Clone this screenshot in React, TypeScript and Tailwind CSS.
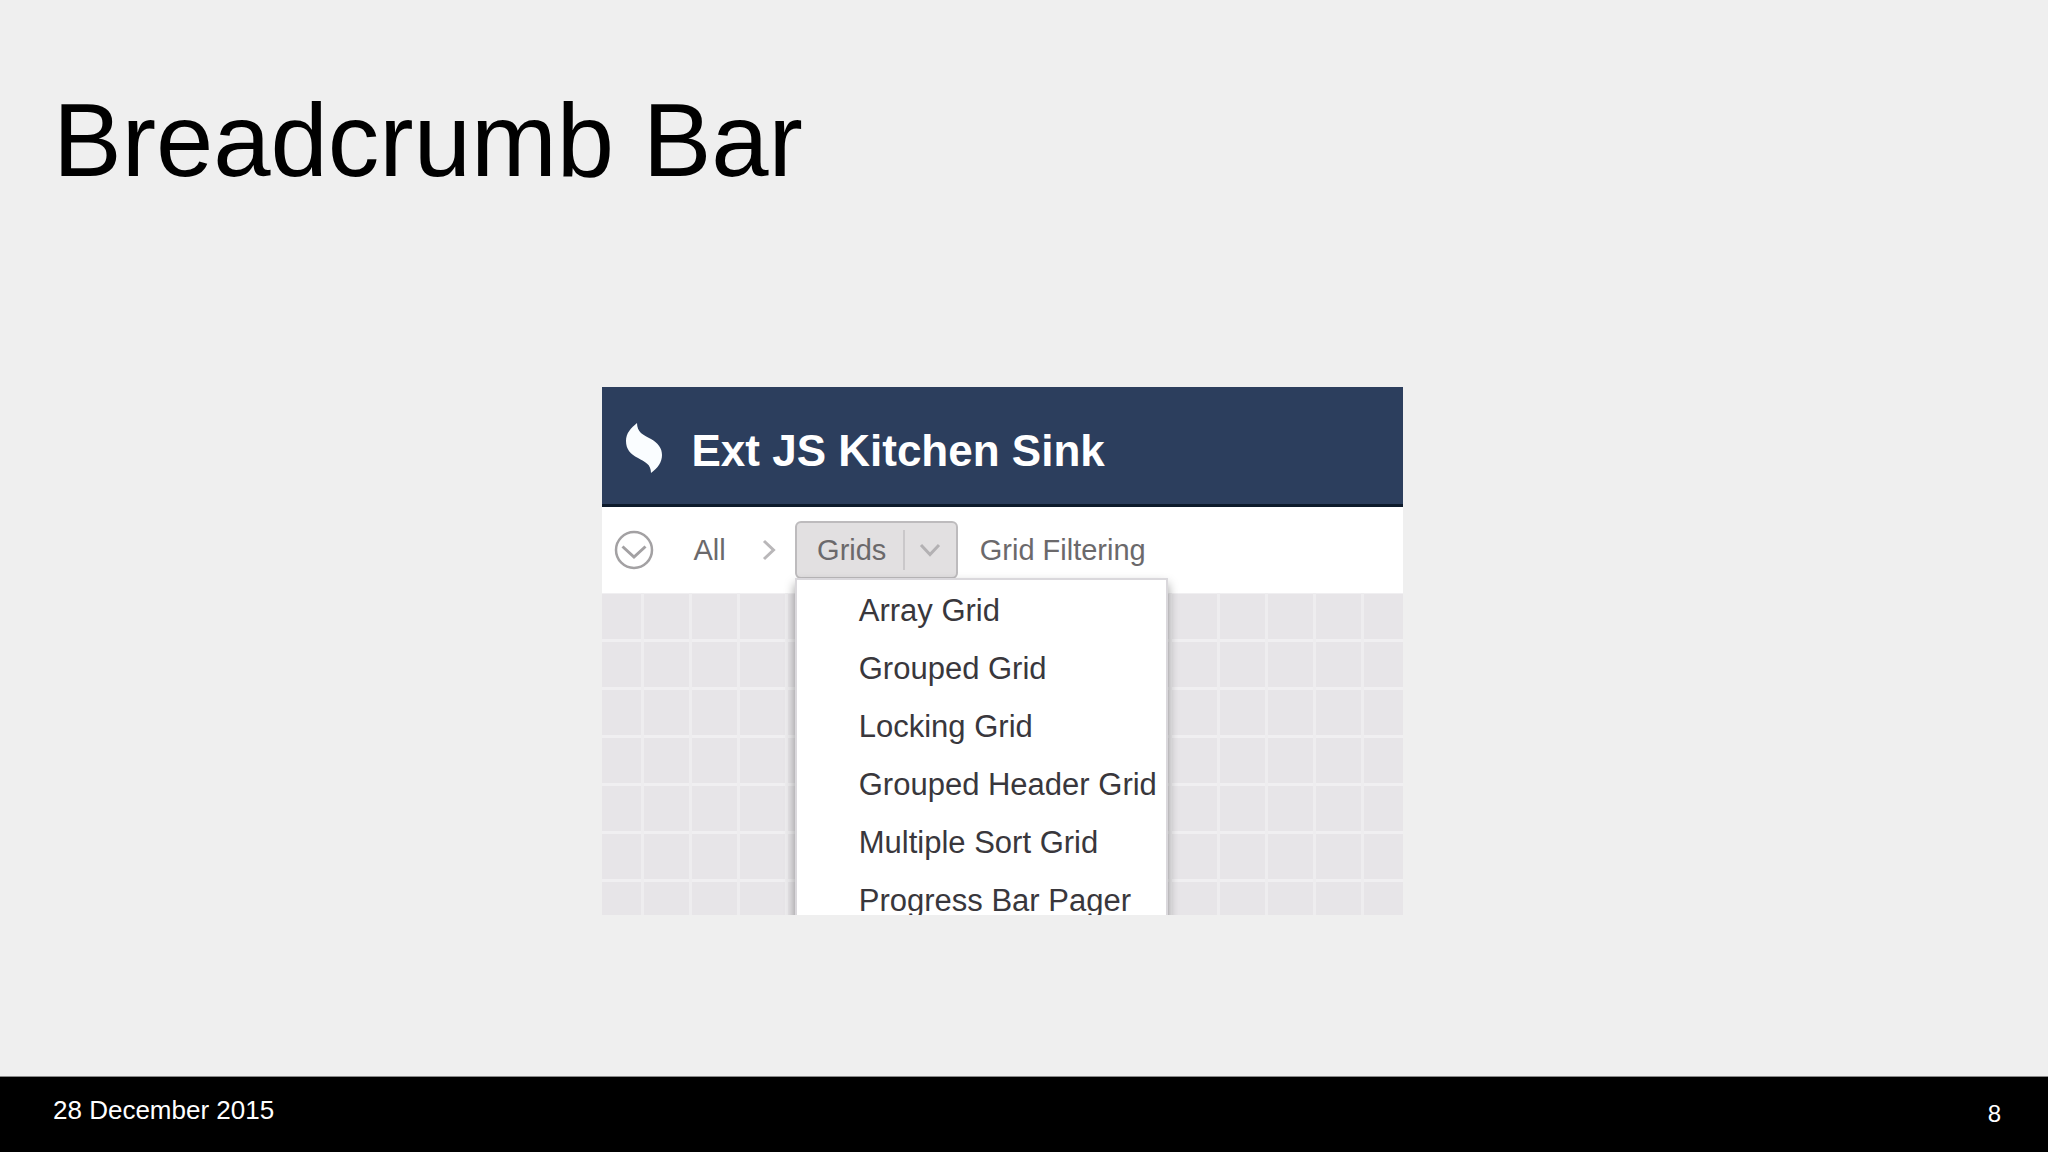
const menuItems = [
  "Array Grid",
  "Grouped Grid",
  "Locking Grid",
  "Grouped Header Grid",
  "Multiple Sort Grid",
  "Progress Bar Pager",
];

function FlameLogo() {
  return (
    <svg viewBox="0 0 36 50" className="h-[50px] w-9 shrink-0" fill="#fafdff" aria-hidden="true">
      <path d="M11 0C5 5 0 10 0 18c0 8 4 13 12 17 7 4 13 6 13 15 7-5 11-11 11-18 0-7-4-12-11-16C17 12 11 9 11 0Z" />
    </svg>
  );
}

function CircleChevron() {
  return (
    <svg viewBox="0 0 40 40" className="size-10" fill="none" stroke="#a3a1a3" aria-hidden="true">
      <circle cx="20" cy="20" r="18" strokeWidth="2.5" />
      <path d="M8.500 16.500 20 27l11.500-10.500" strokeWidth="3" />
    </svg>
  );
}

function Chevron({ right = false }: { right?: boolean }) {
  return right ? (
    <svg viewBox="0 0 14 22" className="h-[22px] w-3.5" fill="none" stroke="#b9b7b9" strokeWidth="3" aria-hidden="true">
      <path d="M2 2l9.500 9L2 20" />
    </svg>
  ) : (
    <svg viewBox="0 0 22 14" className="h-3.5 w-[22px]" fill="none" stroke="#b3b1b3" strokeWidth="3" aria-hidden="true">
      <path d="M2 2l9 9.500L20 2" />
    </svg>
  );
}

function KitchenSink() {
  return (
    <section className="flex h-[528px] w-full max-w-[801px] flex-col overflow-hidden bg-white">
      <header className="flex h-[120px] shrink-0 items-center gap-[30px] border-b-3 border-[#0d1a2b] bg-[#2c3e5d] pt-1 pl-6">
        <FlameLogo />
        <h2 className="pt-1.5 text-[44px] leading-none font-bold whitespace-nowrap text-white">Ext JS Kitchen Sink</h2>
      </header>
      <nav aria-label="Breadcrumb" className="relative z-10 flex h-[86px] shrink-0 items-center bg-white pl-3 text-[29px] leading-none text-[#6b696b]">
        <button type="button" aria-label="Show all levels">
          <CircleChevron />
        </button>
        <button type="button" className="ml-10">All</button>
        <button type="button" aria-label="Open All" className="ml-9 flex">
          <Chevron right />
        </button>
        <div className="relative ml-[19px] flex h-[58px] w-[163px] items-center rounded-md border-2 border-[#bdbbbd] bg-[#e2e0e1]">
          <button type="button" className="h-10 flex-1 border-r-2 border-[#cac8ca] pl-1 text-center">Grids</button>
          <button type="button" aria-label="Open Grids" aria-expanded="true" className="flex h-10 w-[51px] items-center justify-center">
            <Chevron />
          </button>
          <ul className="absolute -left-0.5 top-full mt-px flex w-[373px] flex-col border-2 border-[#dad8dc] bg-white pt-px text-[31px] text-[#39373c] shadow-[0_6px_10px_rgba(0,0,0,0.4)]">
            {menuItems.map((item) => (
              <li key={item}>
                <button type="button" className="h-[58px] w-full pl-[62px] text-left whitespace-nowrap">{item}</button>
              </li>
            ))}
          </ul>
        </div>
        <button type="button" className="ml-[22px] whitespace-nowrap">Grid Filtering</button>
      </nav>
      <div className="flex-1 bg-[#e7e5e8] bg-[linear-gradient(to_right,#eeedef_3px,transparent_3px),linear-gradient(to_bottom,#f0eff1_3px,transparent_3px)] bg-size-[48px_48px] bg-position-[39px_46px]" />
    </section>
  );
}

export default function App() {
  return (
    <div className="flex min-h-screen flex-col bg-[#efefef] font-['Liberation_Sans',Arial,sans-serif]">
      <h1 className="px-[53px] pt-[81px] text-[103px] leading-[120px] text-black">Breadcrumb Bar</h1>
      <main className="flex flex-1 justify-center pt-[186px] pr-11">
        <KitchenSink />
      </main>
      <footer className="flex h-[76px] items-center justify-between border-t border-[#8a8a8a] bg-black pr-[47px] pl-[53px] text-white">
        <time dateTime="2015-12-28" className="pb-2.5 text-[26px] leading-8">28 December 2015</time>
        <span className="pb-0.5 text-2xl">8</span>
      </footer>
    </div>
  );
}
